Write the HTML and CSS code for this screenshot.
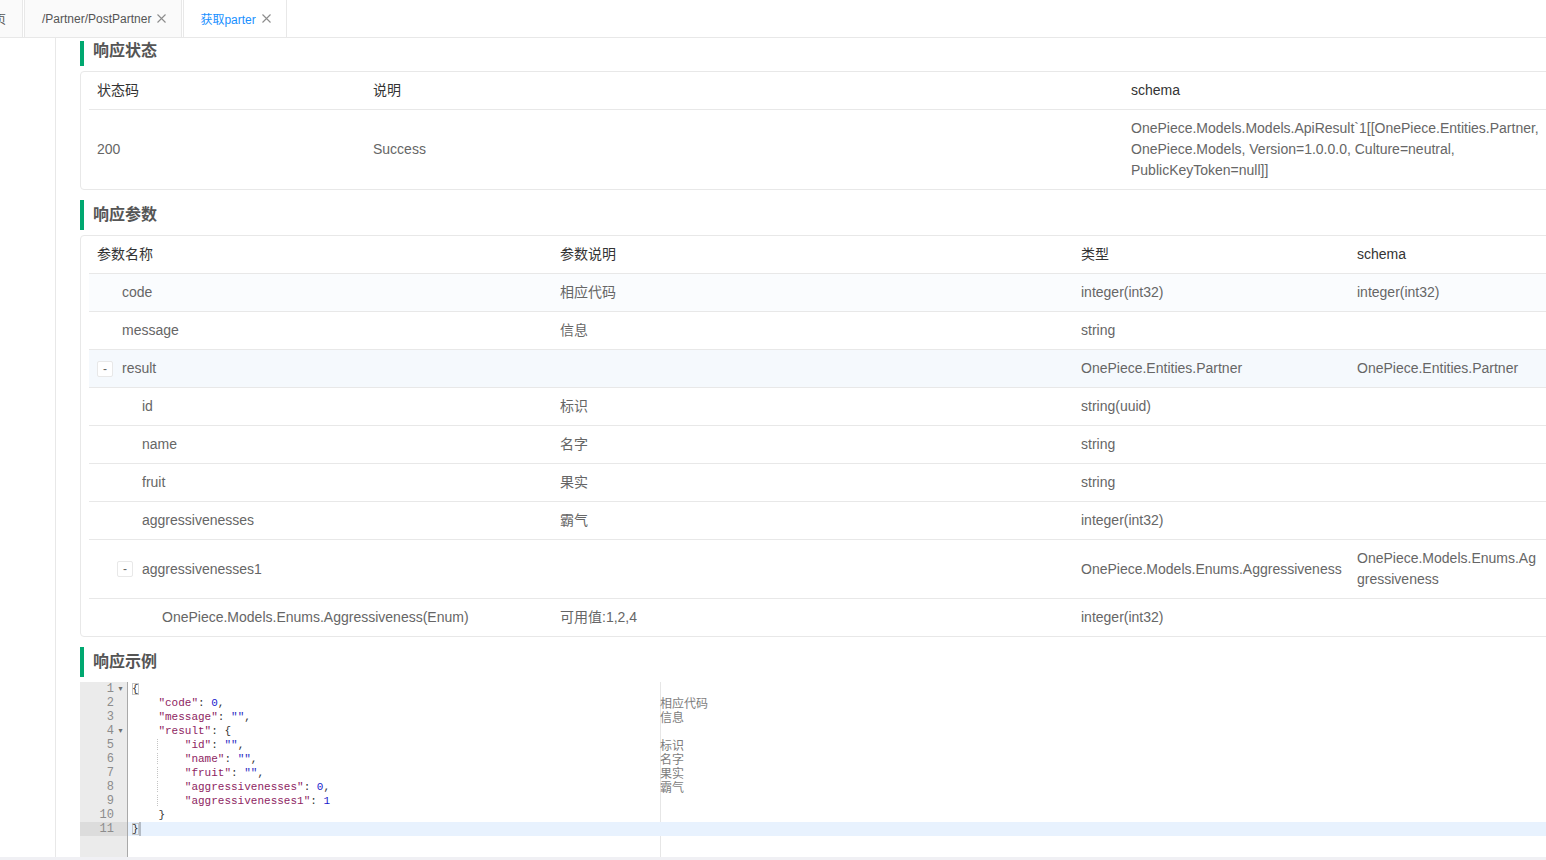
FILE: index.html
```html
<!DOCTYPE html>
<html lang="zh-CN">
<head>
<meta charset="utf-8">
<title>获取parter</title>
<link rel="stylesheet" href="styles.css">
</head>
<body>
<div class="app">
  <div class="tabbar">
    <div class="tabs">
      <div class="tab tab-home">首页</div>
      <div class="tab">/Partner/PostPartner<svg class="x" viewBox="0 0 9 9"><path d="M0.5 0.5L8.5 8.5M8.5 0.5L0.5 8.5"/></svg></div>
      <div class="tab active">获取parter<svg class="x" viewBox="0 0 9 9"><path d="M0.5 0.5L8.5 8.5M8.5 0.5L0.5 8.5"/></svg></div>
    </div>
  </div>
  <div class="body">
    <aside class="side"></aside>
    <main class="main">
      <div class="viewport">
        <div class="content">
          <h3 class="title">响应状态</h3>
          <div class="box">
            <table class="tbl tbl-status">
              <colgroup><col class="c276"><col class="c758"><col class="c425"></colgroup>
              <thead><tr><th>状态码</th><th>说明</th><th>schema</th></tr></thead>
              <tbody>
                <tr><td>200</td><td>Success</td><td>OnePiece.Models.Models.ApiResult`1[[OnePiece.Entities.Partner, OnePiece.Models, Version=1.0.0.0, Culture=neutral, PublicKeyToken=null]]</td></tr>
              </tbody>
            </table>
          </div>

          <h3 class="title">响应参数</h3>
          <div class="box">
            <table class="tbl tbl-params">
              <colgroup><col class="c463"><col class="c521"><col class="c276"><col class="c199"></colgroup>
              <thead><tr><th>参数名称</th><th>参数说明</th><th>类型</th><th>schema</th></tr></thead>
              <tbody>
                <tr class="tint"><td><div class="tree l1"><span class="sp"></span>code</div></td><td>相应代码</td><td class="type">integer(int32)</td><td>integer(int32)</td></tr>
                <tr><td><div class="tree l1"><span class="sp"></span>message</div></td><td>信息</td><td class="type">string</td><td></td></tr>
                <tr class="open"><td><div class="tree l1"><span class="tg">-</span>result</div></td><td></td><td class="type">OnePiece.Entities.Partner</td><td>OnePiece.Entities.Partner</td></tr>
                <tr><td><div class="tree l2"><span class="sp"></span>id</div></td><td>标识</td><td class="type">string(uuid)</td><td></td></tr>
                <tr><td><div class="tree l2"><span class="sp"></span>name</div></td><td>名字</td><td class="type">string</td><td></td></tr>
                <tr><td><div class="tree l2"><span class="sp"></span>fruit</div></td><td>果实</td><td class="type">string</td><td></td></tr>
                <tr><td><div class="tree l2"><span class="sp"></span>aggressivenesses</div></td><td>霸气</td><td class="type">integer(int32)</td><td></td></tr>
                <tr><td><div class="tree l2"><span class="tg">-</span>aggressivenesses1</div></td><td></td><td class="type">OnePiece.Models.Enums.Aggressiveness</td><td>OnePiece.Models.Enums.Aggressiveness</td></tr>
                <tr><td><div class="tree l3"><span class="sp"></span>OnePiece.Models.Enums.Aggressiveness(Enum)</div></td><td>可用值:1,2,4</td><td class="type">integer(int32)</td><td></td></tr>
              </tbody>
            </table>
          </div>

          <h3 class="title">响应示例</h3>
          <div class="editor">
            <div class="ln"><div class="gut"><span class="num">1</span><span class="fold">▾</span></div><div class="src"><span class="bm">{</span></div><div class="note"></div></div>
            <div class="ln"><div class="gut"><span class="num">2</span><span class="fold"></span></div><div class="src">    <span class="k">"code"</span>: <span class="n">0</span>,</div><div class="note">相应代码</div></div>
            <div class="ln"><div class="gut"><span class="num">3</span><span class="fold"></span></div><div class="src">    <span class="k">"message"</span>: <span class="s">""</span>,</div><div class="note">信息</div></div>
            <div class="ln"><div class="gut"><span class="num">4</span><span class="fold">▾</span></div><div class="src">    <span class="k">"result"</span>: {</div><div class="note"></div></div>
            <div class="ln"><div class="gut"><span class="num">5</span><span class="fold"></span></div><div class="src"><span class="ig">    </span>    <span class="k">"id"</span>: <span class="s">""</span>,</div><div class="note">标识</div></div>
            <div class="ln"><div class="gut"><span class="num">6</span><span class="fold"></span></div><div class="src"><span class="ig">    </span>    <span class="k">"name"</span>: <span class="s">""</span>,</div><div class="note">名字</div></div>
            <div class="ln"><div class="gut"><span class="num">7</span><span class="fold"></span></div><div class="src"><span class="ig">    </span>    <span class="k">"fruit"</span>: <span class="s">""</span>,</div><div class="note">果实</div></div>
            <div class="ln"><div class="gut"><span class="num">8</span><span class="fold"></span></div><div class="src"><span class="ig">    </span>    <span class="k">"aggressivenesses"</span>: <span class="n">0</span>,</div><div class="note">霸气</div></div>
            <div class="ln"><div class="gut"><span class="num">9</span><span class="fold"></span></div><div class="src"><span class="ig">    </span>    <span class="k">"aggressivenesses1"</span>: <span class="n">1</span></div><div class="note"></div></div>
            <div class="ln"><div class="gut"><span class="num">10</span><span class="fold"></span></div><div class="src">    }</div><div class="note"></div></div>
            <div class="ln active"><div class="gut"><span class="num">11</span><span class="fold"></span></div><div class="src"><span class="bm">}</span><span class="cur"></span></div><div class="note"></div></div>
          </div>
        </div>
      </div>
    </main>
  </div>
  <div class="hscroll"></div>
</div>
</body>
</html>
```
FILE: styles.css
```css
* { box-sizing: border-box; }
html, body { margin: 0; padding: 0; }
body {
  width: 1546px;
  height: 860px;
  overflow: hidden;
  background: #fff;
  font-family: "Liberation Sans", "Noto Sans CJK SC", sans-serif;
  color: #666;
}
.app {
  display: flex;
  flex-direction: column;
  height: 860px;
}

/* tab bar */
.tabbar {
  height: 38px;
  flex: none;
  border-bottom: 1px solid #e8e8e8;
  overflow: hidden;
}
.tabs {
  display: flex;
  align-items: flex-start;
  gap: 1px;
  margin-left: -36px;
  height: 38px;
}
.tab {
  display: flex;
  align-items: center;
  height: 37px;
  padding: 0 15px 0 17px;
  background: #fafafa;
  border: 1px solid #e8e8e8;
  border-top: none;
  border-bottom: none;
  font-size: 12px;
  color: #555;
  white-space: nowrap;
}
.tab-home { padding-right: 16px; }
.tab.active {
  background: #fff;
  color: #1890ff;
  height: 38px;
  padding-bottom: 2px;
  padding-left: 16px;
}
.x {
  width: 9px;
  height: 9px;
  margin-left: 6px;
  fill: none;
  stroke: #8c8c8c;
  stroke-width: 1.1;
}

/* body */
.body {
  flex: 1;
  display: flex;
  min-height: 0;
}
.side {
  width: 56px;
  flex: none;
  border-right: 1px solid #e8e8e8;
}
.main {
  flex: 1;
  min-width: 0;
  padding: 3px 0 0 24px;
  overflow: hidden;
}
.viewport {
  height: 100%;
  overflow: hidden;
}
.content {
  margin-top: -5px;
  width: 1477px;
}
.hscroll {
  height: 3px;
  flex: none;
  background: #f0f0f4;
}

/* section titles */
.title {
  margin: 10px 0 5px;
  height: 30px;
  line-height: 29px;
  border-left: 4px solid #00a870;
  padding-left: 9px;
  font-size: 16px;
  font-weight: bold;
  color: #555;
}
.content > .title:first-child { margin-top: 0; }

/* tables */
.box {
  border: 1px solid #e8e8e8;
  border-radius: 4px;
  padding: 0 8px;
}
.tbl {
  width: 100%;
  border-collapse: collapse;
  table-layout: fixed;
  font-size: 14px;
}
.c276 { width: 276px; }
.c758 { width: 758px; }
.c425 { width: 425px; }
.c463 { width: 463px; }
.c521 { width: 521px; }
.c199 { width: 199px; }
.tbl th, .tbl td {
  padding: 8px;
  line-height: 21px;
  text-align: left;
  vertical-align: middle;
  font-weight: normal;
  overflow-wrap: anywhere;
}
.tbl td.type {
  white-space: nowrap;
  overflow: hidden;
}
.tbl th { color: #333; }
.tbl td { color: #666; }
.tbl tr { border-bottom: 1px solid #e8e8e8; }
.tbl tbody tr:last-child { border-bottom: none; }
.tbl tr.tint { background: #fafcfe; }
.tbl tr.open { background: #f5f9fd; }

.tree {
  display: flex;
  align-items: center;
}
.tree.l2 { padding-left: 20px; }
.tree.l3 { padding-left: 40px; }
.sp, .tg {
  width: 16px;
  height: 16px;
  flex: none;
  margin-right: 9px;
}
.tg {
  display: flex;
  align-items: center;
  justify-content: center;
  border: 1px solid #e8e8e8;
  border-radius: 2px;
  background: #fff;
  font-size: 12px;
  line-height: 1;
  color: #666;
}

/* code editor */
.editor {
  height: 178px;
  background: linear-gradient(to right, #ebebeb 0 47px, #a9a9a9 47px 48px, #fff 48px 580px, #e6e6e6 580px 581px, #fff 581px);
  font-family: "Liberation Mono", "DejaVu Sans Mono", monospace;
  font-size: 11px;
}
.ln {
  display: flex;
  height: 14px;
  line-height: 14px;
}
.gut {
  width: 47px;
  flex: none;
  display: flex;
  color: #8c8c8c;
  font-size: 12px;
}
.num {
  width: 34px;
  text-align: right;
}
.fold {
  width: 13px;
  text-align: center;
  font-size: 8px;
  color: #6f6f6f;
  font-family: "DejaVu Sans", sans-serif;
}
.src {
  margin-left: 1px;
  width: 532px;
  flex: none;
  padding-left: 4px;
  white-space: pre;
  color: #333;
}
.note {
  flex: 1;
  font-family: "Noto Sans CJK SC", sans-serif;
  font-size: 12px;
  color: #7d7d7d;
  white-space: nowrap;
}
.ln.active .gut { background: #dcdcdc; }
.ln.active .src, .ln.active .note { background: #e8f2fe; }
.k { color: #8e1e62; }
.s { color: #2b2bc4; }
.n { color: #1a1acd; }
.bm { box-shadow: inset 0 0 0 1px #c8c8c8; }
.cur {
  display: inline-block;
  width: 2px;
  height: 14px;
  vertical-align: top;
  background: #b4bcc6;
}
.ig {
  background-image: repeating-linear-gradient(to bottom, #c4c4c4 0 1px, transparent 1px 2px);
  background-size: 1px 100%;
  background-position: right top;
  background-repeat: no-repeat;
}
```
